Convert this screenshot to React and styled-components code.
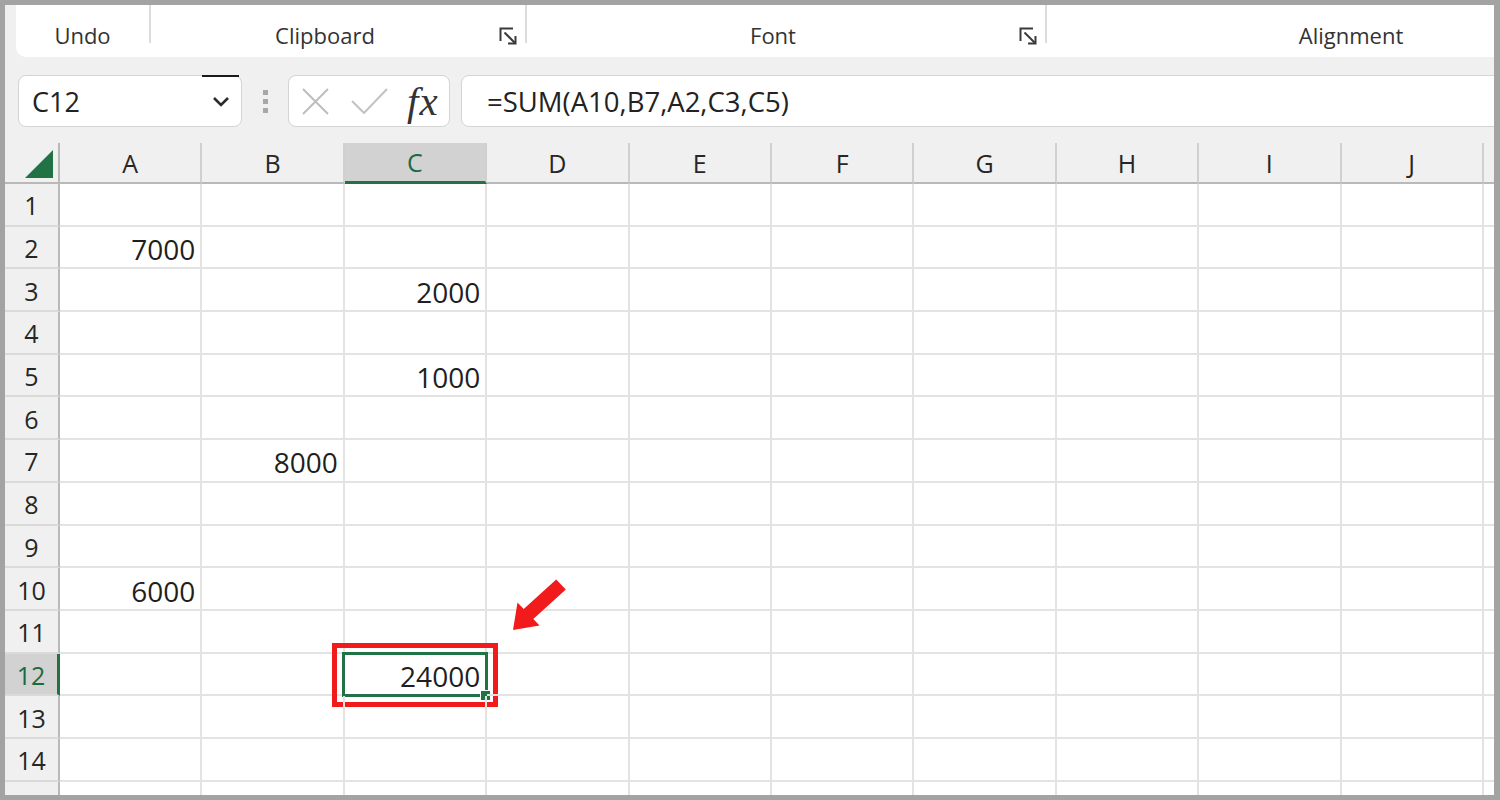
import React from 'react';
import styled, { createGlobalStyle } from 'styled-components';

const GlobalStyle = createGlobalStyle`
  html, body {
    margin: 0;
    padding: 0;
  }
  body {
    font-family: "Open Sans", "Noto Sans", sans-serif;
    background: #fff;
  }
`;

const COLUMNS = ['A', 'B', 'C', 'D', 'E', 'F', 'G', 'H', 'I', 'J', 'K'];
const VISIBLE_LABELS = 10; // K is only a sliver at the right edge
const ROW_COUNT = 15;
const VALUES = {
  A2: '7000',
  C3: '2000',
  C5: '1000',
  B7: '8000',
  A10: '6000',
  C12: '24000',
};
const ACTIVE_COL = 'C';
const ACTIVE_ROW = 12;
const GREEN = '#217346';

const LauncherIcon = () => (
  <Launcher width="19" height="18" viewBox="0 0 19 18">
    <path d="M1.5 14 V1.5 H14" fill="none" stroke="#3a3a3a" strokeWidth="2" />
    <path d="M5.5 5.5 L16 16" fill="none" stroke="#3a3a3a" strokeWidth="2" />
    <path d="M16.5 9 V16.5 H9" fill="none" stroke="#3a3a3a" strokeWidth="2" />
  </Launcher>
);

const App = () => {
  const groups = [
    { label: 'Undo', width: 133 },
    { label: 'Clipboard', width: 374, launcher: true },
    { label: 'Font', width: 518, launcher: true },
    { label: 'Alignment', width: 608, last: true },
  ];

  const rows = Array.from({ length: ROW_COUNT }, (_, i) => i + 1);

  return (
    <>
      <GlobalStyle />
      <Frame>
        <Ribbon>
          {groups.map((g) => (
            <React.Fragment key={g.label}>
              <Group $width={g.width}>
                <GroupLabel>{g.label}</GroupLabel>
                {g.launcher && <LauncherIcon />}
              </Group>
              {!g.last && <Divider />}
            </React.Fragment>
          ))}
        </Ribbon>

        <FormulaBar>
          <NameBox>
            <span>C12</span>
            <svg width="18" height="11" viewBox="0 0 18 11">
              <path d="M2 2 L9 9 L16 2" fill="none" stroke="#2b2b2b" strokeWidth="2.6" />
            </svg>
          </NameBox>
          <Grip>
            <span />
            <span />
            <span />
          </Grip>
          <FxBox>
            <svg width="27" height="27" viewBox="0 0 27 27">
              <path d="M1 1 L26 26 M26 1 L1 26" stroke="#bdbdbd" strokeWidth="2" />
            </svg>
            <svg width="37" height="26" viewBox="0 0 37 26">
              <path d="M1 13 L13 25 L36 1" fill="none" stroke="#c2c2c2" strokeWidth="2" />
            </svg>
            <FxText>fx</FxText>
          </FxBox>
          <FormulaInput>=SUM(A10,B7,A2,C3,C5)</FormulaInput>
        </FormulaBar>

        <Sheet>
          <Corner>
            <svg width="28" height="28" viewBox="0 0 28 28">
              <polygon points="28,0 28,28 0,28" fill={GREEN} />
            </svg>
          </Corner>
          {COLUMNS.map((c, i) => (
            <ColHeader key={c} $active={c === ACTIVE_COL}>
              {i < VISIBLE_LABELS ? c : ''}
            </ColHeader>
          ))}
          {rows.map((r) => (
            <React.Fragment key={r}>
              <RowHeader $active={r === ACTIVE_ROW}>{r}</RowHeader>
              {COLUMNS.map((c) => {
                const id = `${c}${r}`;
                const active = c === ACTIVE_COL && r === ACTIVE_ROW;
                return (
                  <Cell key={id}>
                    {VALUES[id]}
                    {active && (
                      <>
                        <Selection />
                        <FillHandle />
                        <Highlight />
                      </>
                    )}
                  </Cell>
                );
              })}
            </React.Fragment>
          ))}
          <Arrow width="70" height="65" viewBox="0 0 70 65">
            <polygon
              points="8,60 12.5,32.4 18.7,38.9 51.2,9.4 60.8,19.6 28.3,49.1 34.5,55.6"
              fill="#f21b1b"
            />
          </Arrow>
        </Sheet>
      </Frame>
    </>
  );
};

export default App;

const Frame = styled.div`
  box-sizing: border-box;
  width: 1500px;
  height: 800px;
  border: 5px solid #a3a3a3;
  border-right-width: 6px;
  background: #f0f0f0;
  overflow: hidden;
  display: flex;
  flex-direction: column;
`;

const Ribbon = styled.div`
  display: flex;
  flex-shrink: 0;
  height: 52px;
  margin-left: 11px;
  background: #fff;
  border-bottom-left-radius: 10px;
  overflow: hidden;
`;

const Group = styled.div`
  display: flex;
  align-items: flex-start;
  flex-shrink: 0;
  width: ${(p) => p.$width}px;
`;

const GroupLabel = styled.div`
  flex: 1;
  text-align: center;
  padding-top: 17px;
  font-size: 22px;
  line-height: 26px;
  color: #333;
`;

const Launcher = styled.svg`
  flex-shrink: 0;
  margin: 22px 7px 0 0;
`;

const Divider = styled.div`
  flex-shrink: 0;
  width: 2px;
  height: 38px;
  background: #dcdcdc;
`;

const FormulaBar = styled.div`
  display: flex;
  align-items: center;
  flex-shrink: 0;
  height: 52px;
  margin-top: 18px;
  padding-left: 13px;
`;

const NameBox = styled.div`
  position: relative;
  box-sizing: border-box;
  flex-shrink: 0;
  width: 224px;
  height: 52px;
  display: flex;
  align-items: center;
  justify-content: space-between;
  padding: 0 11px 0 13px;
  background: #fff;
  border: 1px solid #d4d4d4;
  border-radius: 8px;
  font-size: 27px;
  color: #222;

  &::before {
    content: '';
    position: absolute;
    top: -1px;
    left: 183px;
    width: 37px;
    height: 2px;
    background: #1a1a1a;
  }
`;

const Grip = styled.div`
  display: flex;
  flex-direction: column;
  gap: 4px;
  margin: 0 20px 0 21px;

  span {
    display: block;
    width: 5px;
    height: 5px;
    background: #a8a8a8;
  }
`;

const FxBox = styled.div`
  box-sizing: border-box;
  flex-shrink: 0;
  width: 162px;
  height: 52px;
  display: flex;
  align-items: center;
  gap: 21px;
  padding-left: 13px;
  background: #fff;
  border: 1px solid #d4d4d4;
  border-radius: 8px;

  svg + svg {
    margin-left: 1px;
  }
`;

const FxText = styled.span`
  margin-left: -2px;
  font-family: "Liberation Serif", "DejaVu Serif", serif;
  font-style: italic;
  font-size: 41px;
  line-height: 1;
  color: #333;
  letter-spacing: 1px;
`;

const FormulaInput = styled.div`
  box-sizing: border-box;
  flex-shrink: 0;
  width: 1080px;
  height: 52px;
  display: flex;
  align-items: center;
  margin-left: 11px;
  padding-left: 25px;
  background: #fff;
  border: 1px solid #d4d4d4;
  border-radius: 8px;
  font-size: 27.5px;
  color: #222;
`;

const Sheet = styled.div`
  position: relative;
  flex-shrink: 0;
  margin-top: 16px;
  display: grid;
  grid-template-columns: 55px repeat(11, 142.4px);
  grid-template-rows: 41px repeat(${ROW_COUNT}, 42.7px);
  background: #fff;
`;

const Corner = styled.div`
  box-sizing: border-box;
  display: flex;
  align-items: flex-end;
  justify-content: flex-end;
  padding: 0 5px 4px 0;
  background: #f0f0f0;
  border-right: 2px solid #b9b9b9;
  border-bottom: 2px solid #b9b9b9;
`;

const ColHeader = styled.div`
  box-sizing: border-box;
  display: flex;
  align-items: center;
  justify-content: center;
  background: ${(p) => (p.$active ? '#d2d2d2' : '#f0f0f0')};
  border-right: 2px solid #d0d0d0;
  border-bottom: ${(p) => (p.$active ? `3px solid ${GREEN}` : '2px solid #b9b9b9')};
  font-size: 25px;
  color: ${(p) => (p.$active ? '#1c6a40' : '#262626')};
`;

const RowHeader = styled.div`
  box-sizing: border-box;
  display: flex;
  align-items: center;
  justify-content: center;
  padding-top: 2px;
  background: ${(p) => (p.$active ? '#d2d2d2' : '#f0f0f0')};
  border-right: ${(p) => (p.$active ? `3px solid ${GREEN}` : '2px solid #b9b9b9')};
  border-bottom: 2px solid #dadada;
  font-size: 25px;
  color: ${(p) => (p.$active ? '#1c6a40' : '#262626')};
`;

const Cell = styled.div`
  position: relative;
  box-sizing: border-box;
  display: flex;
  align-items: center;
  justify-content: flex-end;
  padding: 4px 5px 0 0;
  border-right: 2px solid #e3e3e3;
  border-bottom: 2px solid #e3e3e3;
  font-size: 28px;
  color: #1f1f1f;
`;

const Selection = styled.div`
  position: absolute;
  top: -2px;
  left: -3px;
  right: -3px;
  bottom: -3px;
  border: 3px solid ${GREEN};
  pointer-events: none;
`;

const FillHandle = styled.div`
  position: absolute;
  right: -6px;
  bottom: -7px;
  width: 9px;
  height: 9px;
  background: ${GREEN};
  border: 1px solid #fff;
`;

const Highlight = styled.div`
  position: absolute;
  top: -11px;
  left: -13px;
  right: -13px;
  bottom: -13px;
  border: 5px solid #f21b1b;
  pointer-events: none;
`;

const Arrow = styled.svg`
  position: absolute;
  left: 500px;
  top: 427px;
`;
